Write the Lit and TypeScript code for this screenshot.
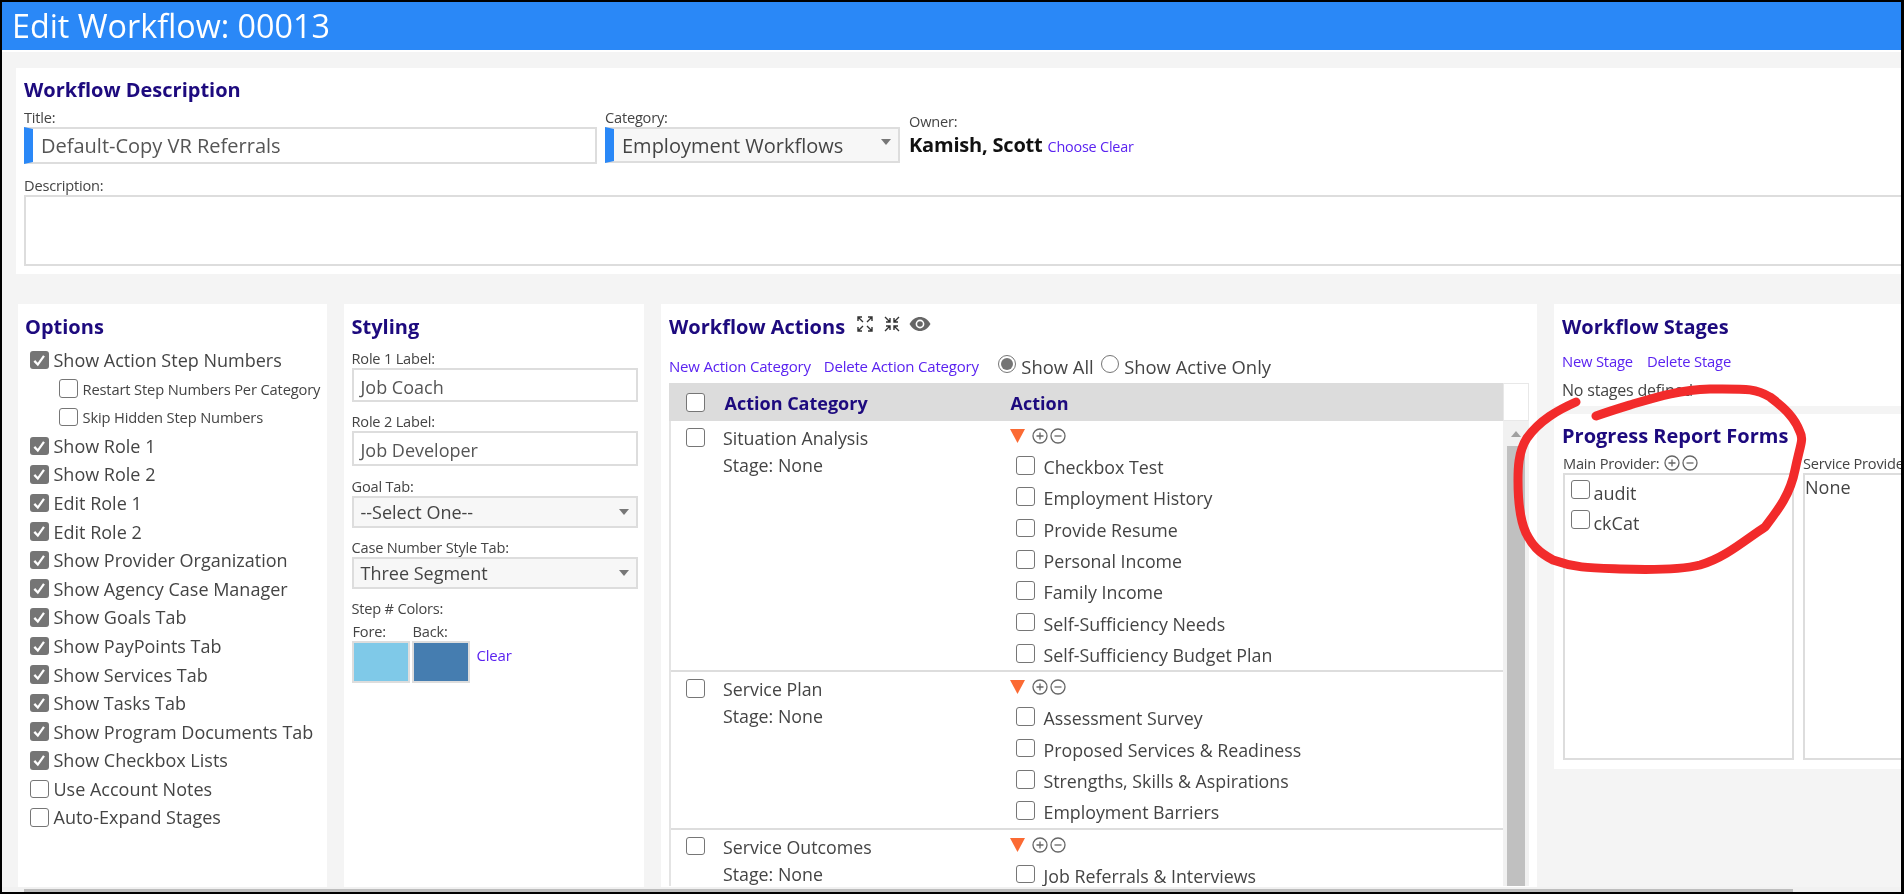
import { LitElement, html, css, svg } from "lit";
import { customElement } from "lit/decorators.js";

const cb = (checked = false, cls = "") => html`<span class="cb ${checked ? "on" : ""} ${cls}">${checked
  ? html`<svg viewBox="0 0 18 18"><path d="M4.2 9.6 L7.6 13.2 L13.6 4.8" fill="none" stroke="#fff" stroke-width="2.2"/></svg>`
  : ""}</span>`;

const plusMinus = html`<svg class="pm" viewBox="0 0 34 16" width="34" height="16">
  <g fill="none" stroke="#666" stroke-width="1.3">
    <circle cx="8" cy="8" r="7"/><path d="M4.5 8h7M8 4.5v7"/>
    <circle cx="26" cy="8" r="7"/><path d="M22.5 8h7"/>
  </g></svg>`;

const tri = html`<svg class="tri" viewBox="0 0 15 14" width="15" height="14"><path d="M0 0H15L7.5 14Z" fill="#fb6a33"/></svg>`;

@customElement("app-root")
export class AppRoot extends LitElement {
  static styles = css`
    :host { display: block; font-family: "Open Sans", "Noto Sans", sans-serif; }
    * { box-sizing: border-box; }
    .frame { width: 1904px; height: 894px; background: #000; padding: 2px 3px 2px 2px; display: flex; flex-direction: column; }
    .page { flex: 1; min-height: 0; background: #f4f4f4; display: flex; flex-direction: column; position: relative; overflow: hidden; filter: blur(.3px); }
    .titlebar { height: 50px; flex: none; background: #2a88f7; border-bottom: 2px solid #fff; color: #fff; font-size: 32.3px; line-height: 46px; padding-left: 10px; }
    h2 { margin: 0; font-size: 20px; line-height: 26px; font-weight: 700; color: #1d0a7e; white-space: nowrap; }
    .lbl { font-size: 14.6px; line-height: 18px; color: #444; white-space: nowrap; letter-spacing: -.2px; }
    a { color: #5a22f0; font-size: 15px; white-space: nowrap; letter-spacing: -.2px; }

    .desc { flex: none; height: 206px; margin: 16px 0 0 14px; background: #fff; padding: 9px 0 0 8px; }
    .desc-row { display: flex; margin-top: 5px; }
    .f-title { width: 573px; margin-right: 8px; }
    .f-cat { width: 295px; margin-right: 9px; }
    .field { height: 37px; margin-top: 1px; border: 2px solid #ddd; border-left: 9px solid #2a88f7; font-size: 20px; line-height: 33px; padding-left: 8px; color: #555; background: #fff; }
    .field.sel { background: #f7f7f7; height: 36px; position: relative; color: #444; }
    .arrow { position: absolute; width: 0; height: 0; border-left: 5px solid transparent; border-right: 5px solid transparent; border-top: 6px solid #777; }
    .field .arrow { right: 7px; top: 10px; }
    .owner { padding-top: 4px; }
    .owner .name { margin-top: 2px; font-size: 20px; font-weight: 700; color: #111; line-height: 26px; white-space: nowrap; letter-spacing: -.2px; }
    .owner .ln { font-size: 14.4px; font-weight: 400; }
    .owner a { font-size: 14.4px; }
    .desc .dlabel { margin-top: 12px; }
    .tarea { height: 71px; margin-top: 1px; border: 2px solid #ddd; border-right: none; background: #fff; }

    .row { flex: none; height: 583px; margin: 30px 0 0 16px; display: flex; }
    .card { background: #fff; flex: none; padding-top: 10px; }
    .options { width: 309px; padding-left: 7px; margin-right: 16.5px; }
    .styling { width: 300.5px; padding-left: 8px; margin-right: 17px; }
    .actions { width: 876px; padding-left: 8px; }
    .right { width: 347px; margin-left: 17px; display: flex; flex-direction: column; gap: 8px; }

    .opts { margin-top: 5.7px; }
    .opt { height: 28.6px; display: flex; align-items: center; padding-left: 5px; font-size: 18px; color: #444; white-space: nowrap; }
    .opt .cb { margin-right: 5px; }
    .opt.sub { padding-left: 34px; font-size: 14.7px; letter-spacing: -.15px; }
    .opt.sub .cb { margin-right: 5px; }
    .cb { display: inline-block; flex: none; width: 18.5px; height: 18.5px; border: 1.5px solid #767676; border-radius: 3px; background: #fff; }
    .cb.on { background: #757575; border: none; }
    .cb svg { display: block; width: 100%; height: 100%; }

    .styling .lbl { width: 286px; }
    .st1 { margin-top: 9px; }
    .inp { width: 286px; border: 2px solid #ddd; background: #fff; font-size: 18px; color: #555; padding-left: 7px; display: flex; align-items: center; padding-top: 3px; position: relative; }
    .inp.sel { background: #f7f7f7; color: #444; padding-top: 0; }
    .inp .arrow { right: 7px; top: 11px; }
    .colors { display: flex; margin-top: 5px; }
    .swatch { display: flex; flex-direction: column; width: 60px; }
    .swatch i { display: block; height: 42px; width: 58px; border: 2px solid #ddd; margin-top: 1px; }
    .swatch .lbl { width: auto; padding-left: 1px; }
    .clear { margin: 23px 0 0 5px; }

    .act-title { display: flex; align-items: flex-start; }
    .links { display: flex; align-items: center; height: 26px; margin-top: 13px; margin-bottom: 1px; position: relative; }
    .links a + a { margin-left: 13px; }
    .rad { display: inline-block; flex: none; width: 18.5px; height: 18.5px; border: 1.5px solid #767676; border-radius: 50%; background: #fff; margin-top: -4px; position: relative; }
    .rad.on::after { content: ""; position: absolute; inset: 2px; border-radius: 50%; background: #757575; }
    .rtext { font-size: 18.4px; color: #444; white-space: nowrap; margin-left: 5px; }
    .table { margin-top: 4px; width: 860px; height: 503px; display: flex; flex-direction: column; }
    .thead { flex: none; height: 38px; display: flex; }
    .thead .gray { flex: none; width: 834px; background: #dcdcdc; display: flex; align-items: center; font-size: 18px; font-weight: 700; color: #1d0a7e; white-space: nowrap; padding: 1px 0 0 17px; }
    .thead .gray .a1 { margin-left: 20px; width: 286px; }
    .thead .blank { flex: 1; border: 1px solid #e8e8e8; background: #fff; }
    .tbody { flex: 1; min-height: 0; display: flex; }
    .rows { flex: none; width: 834px; border-left: 2px solid #e4e4e4; overflow: hidden; }
    .trow { display: flex; border-bottom: 2px solid #ddd; padding-top: 7px; box-sizing: content-box; }
    .c1 { flex: none; width: 52px; padding-left: 15px; }
    .c2 { flex: none; width: 287px; font-size: 17.8px; color: #444; line-height: 27px; margin-top: -3px; white-space: nowrap; }
    .c3 { flex: 1; }
    .tools { display: flex; align-items: flex-start; height: 23px; }
    .tri { margin-top: 1px; }
    .pm { margin: 0 0 0 7px; }
    .item { height: 31.35px; display: flex; padding-left: 6px; font-size: 17.8px; color: #444; white-space: nowrap; }
    .item .cb { margin-top: 5px; }
    .item span.t { margin-left: 9px; line-height: 24px; margin-top: 4px; }
    .sbar { flex: 1; background: #f1f1f1; display: flex; flex-direction: column; align-items: center; position: relative; }
    .sbar .up { width: 0; height: 0; border-left: 5px solid transparent; border-right: 5px solid transparent; border-bottom: 6px solid #a0a0a0; margin-top: 10px; }
    .sbar .thumb { width: 18px; flex: 1; margin-top: 9px; background: #c0c0c0; }

    .stages { height: 102px; padding-left: 8px; }
    .stages .lk { margin-top: 11px; height: 20px; line-height: 20px; display: flex; gap: 14px; }
    .stages a { font-size: 14.8px; }
    .nost { margin-top: 9px; font-size: 16px; line-height: 20px; color: #444; letter-spacing: -.2px; }
    .progress { height: 355px; padding: 9px 0 0 9px; overflow: hidden; }
    .progress h2 { margin-left: -1px; }
    .pcols { display: flex; margin-top: 5px; }
    .pc1 { flex: none; width: 231px; margin-right: 9px; }
    .pc2 { flex: none; width: 98px; overflow: hidden; }
    .pl { display: flex; align-items: center; height: 18px; gap: 5px; }
    .pl .pm { margin: 0; }
    .pbox { height: 287px; margin-top: 1px; border: 2px solid #ddd; padding: 5px 0 0 6px; font-size: 18px; color: #444; }
    .pc2 .pbox { border-right: none; padding: 0; width: 110px; }
    .pitem { display: flex; height: 30px; }
    .pitem span.t { margin-left: 4px; margin-top: 1px; line-height: 24px; }
    .hscroll { flex: none; height: 5px; background: #f1f1f1; padding: 2px 0 0 22px; }
    .hscroll i { display: block; width: 1769px; height: 3px; background: #bdbdbd; }
    .ring { position: absolute; left: -2px; top: -2px; width: 1904px; height: 894px; pointer-events: none; }
  `;

  private group(name: string, items: string[]) {
    return html`<div class="trow">
      <div class="c1">${cb()}</div>
      <div class="c2">${name}<br />Stage: None</div>
      <div class="c3">
        <div class="tools">${tri}${plusMinus}</div>
        ${items.map((i) => html`<div class="item">${cb()}<span class="t">${i}</span></div>`)}
      </div>
    </div>`;
  }

  render() {
    const opts: [string, boolean, boolean?][] = [
      ["Show Action Step Numbers", true],
      ["Restart Step Numbers Per Category", false, true],
      ["Skip Hidden Step Numbers", false, true],
      ["Show Role 1", true], ["Show Role 2", true], ["Edit Role 1", true], ["Edit Role 2", true],
      ["Show Provider Organization", true], ["Show Agency Case Manager", true], ["Show Goals Tab", true],
      ["Show PayPoints Tab", true], ["Show Services Tab", true], ["Show Tasks Tab", true],
      ["Show Program Documents Tab", true], ["Show Checkbox Lists", true],
      ["Use Account Notes", false], ["Auto-Expand Stages", false],
    ];
    return html`<div class="frame"><div class="page">
      <div class="titlebar">Edit Workflow: 00013</div>

      <div class="desc">
        <h2>Workflow Description</h2>
        <div class="desc-row">
          <div class="f-title"><div class="lbl">Title:</div><div class="field">Default-Copy VR Referrals</div></div>
          <div class="f-cat"><div class="lbl">Category:</div><div class="field sel">Employment Workflows<span class="arrow"></span></div></div>
          <div class="owner"><div class="lbl">Owner:</div><div class="name">Kamish, Scott <span class="ln"><a>Choose</a> <a>Clear</a></span></div></div>
        </div>
        <div class="lbl dlabel">Description:</div>
        <div class="tarea"></div>
      </div>

      <div class="row">
        <div class="card options">
          <h2>Options</h2>
          <div class="opts">
            ${opts.map(([t, c, s]) => html`<div class="opt ${s ? "sub" : ""}">${cb(c)}<span>${t}</span></div>`)}
          </div>
        </div>

        <div class="card styling">
          <h2>Styling</h2>
          <div class="lbl st1">Role 1 Label:</div>
          <div class="inp" style="height:34px;margin-top:1px">Job Coach</div>
          <div class="lbl" style="margin-top:10px">Role 2 Label:</div>
          <div class="inp" style="height:35px;margin-top:1px">Job Developer</div>
          <div class="lbl" style="margin-top:11px">Goal Tab:</div>
          <div class="inp sel" style="height:32px;margin-top:1px">--Select One--<span class="arrow"></span></div>
          <div class="lbl" style="margin-top:10px">Case Number Style Tab:</div>
          <div class="inp sel" style="height:32px;margin-top:1px">Three Segment<span class="arrow"></span></div>
          <div class="lbl" style="margin-top:10px">Step # Colors:</div>
          <div class="colors">
            <div class="swatch"><div class="lbl">Fore:</div><i style="background:#7fc9e8"></i></div>
            <div class="swatch"><div class="lbl">Back:</div><i style="background:#457db0"></i></div>
            <a class="clear">Clear</a>
          </div>
        </div>

        <div class="card actions">
          <div class="act-title">
            <h2>Workflow Actions</h2>
            <svg width="18" height="18" viewBox="0 0 18 18" style="margin:1px 0 0 11px" fill="none" stroke="#333" stroke-width="1.4">
              <path d="M2 6V2H6M2 2L7 7M12 2H16V6M16 2L11 7M2 12V16H6M2 16L7 11M12 16H16V12M16 16L11 11"/>
            </svg>
            <svg width="18" height="18" viewBox="0 0 18 18" style="margin:1px 0 0 9px" fill="none" stroke="#333" stroke-width="1.4">
              <path d="M3 7H7V3M7 7L2 2M11 3V7H15M11 7L16 2M3 11H7V15M7 11L2 16M11 15V11H15M11 11L16 16"/>
            </svg>
            <svg width="22" height="16" viewBox="0 0 22 16" style="margin:2px 0 0 8px">
              <path d="M0.5 8C3 3.5 7 1 11 1s8 2.500 10.500 7C19 12.500 15 15 11 15S3 12.500 .5 8Z" fill="#666"/>
              <circle cx="11" cy="8" r="4.400" fill="#fff"/><circle cx="11" cy="8" r="2.800" fill="#666"/>
            </svg>
          </div>
          <div class="links">
            <a>New Action Category</a><a>Delete Action Category</a>
            <span class="rad on" style="margin-left:19px"></span><span class="rtext">Show All</span>
            <span class="rad" style="margin-left:7px"></span><span class="rtext">Show Active Only</span>
          </div>
          <div class="table">
            <div class="thead">
              <div class="gray">${cb()}<span class="a1">Action Category</span><span>Action</span></div>
              <div class="blank"></div>
            </div>
            <div class="tbody">
              <div class="rows">
                ${this.group("Situation Analysis", ["Checkbox Test", "Employment History", "Provide Resume", "Personal Income", "Family Income", "Self-Sufficiency Needs", "Self-Sufficiency Budget Plan"])}
                ${this.group("Service Plan", ["Assessment Survey", "Proposed Services & Readiness", "Strengths, Skills & Aspirations", "Employment Barriers"])}
                ${this.group("Service Outcomes", ["Job Referrals & Interviews"])}
              </div>
              <div class="sbar"><span class="up"></span><span class="thumb"></span></div>
            </div>
          </div>
        </div>

        <div class="right">
          <div class="card stages">
            <h2>Workflow Stages</h2>
            <div class="lk"><a>New Stage</a><a>Delete Stage</a></div>
            <div class="nost">No stages defined</div>
          </div>
          <div class="card progress">
            <h2>Progress Report Forms</h2>
            <div class="pcols">
              <div class="pc1">
                <div class="pl"><span class="lbl">Main Provider:</span>${plusMinus}</div>
                <div class="pbox">
                  <div class="pitem">${cb()}<span class="t">audit</span></div>
                  <div class="pitem">${cb()}<span class="t">ckCat</span></div>
                </div>
              </div>
              <div class="pc2">
                <div class="pl"><span class="lbl">Service Provider:</span></div>
                <div class="pbox">None</div>
              </div>
            </div>
          </div>
        </div>
      </div>

      <div class="hscroll"><i></i></div>

      <svg class="ring" viewBox="0 0 1904 894">${svg`<path fill="none" stroke="#f22b2b" stroke-width="9" stroke-linecap="round" stroke-linejoin="round"
        d="M1576 402C1558 410 1540 420 1527 438C1518 452 1518 470 1518 480C1518 505 1520 520 1526 533C1532 545 1538 552 1553 560C1575 568 1590 568 1620 569C1650 570 1680 570 1700 565C1725 558 1745 540 1765 527C1778 510 1790 495 1795 470C1800 445 1804 440 1800 432C1795 418 1785 408 1770 397C1755 388 1745 389 1710 389C1680 390 1660 396 1633 404C1620 408 1610 411 1596 416"/>`}</svg>
    </div></div>`;
  }
}
